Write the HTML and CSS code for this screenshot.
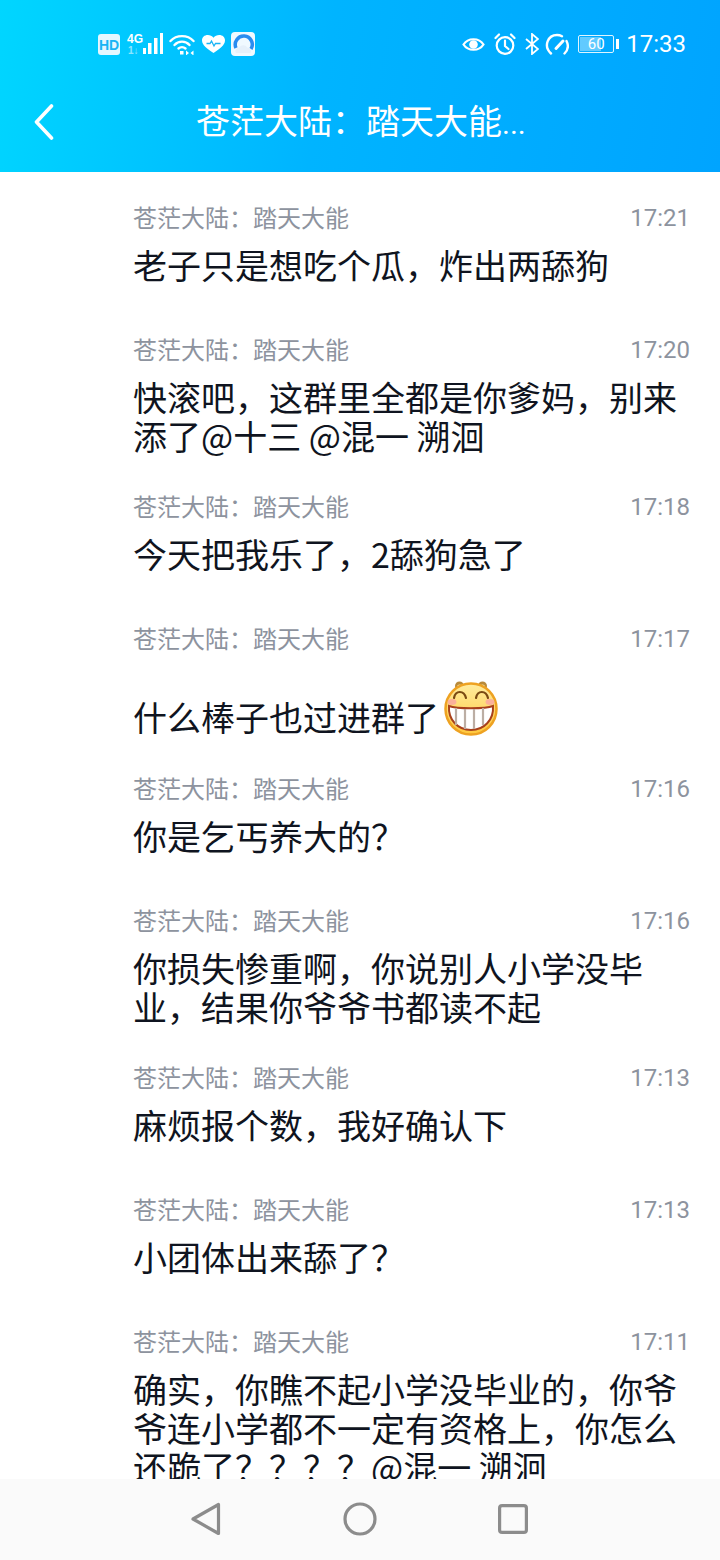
FILE: index.html
```html
<!DOCTYPE html>
<html lang="zh">
<head>
<meta charset="utf-8">
<title>苍茫大陆：踏天大能</title>
<link rel="stylesheet" href="styles.css">
</head>
<body>
<div class="page">
  <header class="top">
    <div class="status">
      <div class="status-group left">
        <svg class="ic" width="22" height="21" viewBox="0 0 22 21"><rect width="22" height="21" rx="3" fill="#e4f7ff"/><text x="11" y="16" class="hd">HD</text></svg>
        <svg class="ic signal" width="36" height="22" viewBox="0 0 36 22"><text x="0" y="10" class="net">4G</text><text x="1" y="21" class="net dim">1↓</text><g fill="#fff"><rect x="16" y="15" width="3" height="6"/><rect x="21" y="10" width="3.500" height="11"/><rect x="27" y="5" width="3.500" height="16"/><rect x="33" y="0" width="3" height="21"/></g></svg>
        <svg class="ic" width="26" height="21" viewBox="0 0 26 21" fill="none" stroke="#fff" stroke-width="2.400" stroke-linecap="round"><path d="M1.500 7C7.500 .5 18.500 .5 24.500 7"/><path d="M5.500 11C9.500 6.500 16.500 6.500 20.500 11"/><path d="M9.500 14.500C11.500 12.800 14.500 12.800 16.500 14.500"/><rect x="11" y="17" width="3.500" height="3.500" fill="#fff" stroke="none"/><path d="M20 19l-3-2.500v5zM21.500 19l3-2.500v5z" fill="#fff" stroke="none"/></svg>
        <svg class="ic heart" width="23" height="18" viewBox="0 0 23 18"><path d="M11.500 18C5.500 14 0 10.500 0 5.300 0 2.200 2.500 0 5.800 0 8 0 10.200 1 11.500 2.700 12.800 1 15 0 17.200 0 20.500 0 23 2.200 23 5.300 23 10.500 17.500 14 11.500 18Z" fill="#fff"/><path d="M4.500 8.500h3.500l1.500-2.500 2.500 5 1.500-2.500h5" fill="none" stroke="#19b4f5" stroke-width="1.300"/></svg>
        <svg class="ic" width="24" height="24" viewBox="0 0 24 24"><rect width="24" height="24" rx="4" fill="#f0f9ff"/><path d="M5 16A8.500 8.500 0 1 1 20 17" fill="none" stroke="#2a8cf0" stroke-width="3.500"/><path d="M5 21c-2-3 1-5.500 3.500-5.500 1-3 6.500-3 7.500 0 3 0 5 3 3.500 5.500z" fill="#e6f0fa"/></svg>
      </div>
      <div class="status-group right">
        <svg class="ic" width="23" height="17" viewBox="0 0 23 17"><path d="M1.500 8.500C6 1.500 17 1.500 21.500 8.500 17 15.500 6 15.500 1.500 8.500Z" fill="none" stroke="#fff" stroke-width="2.200"/><circle cx="11.500" cy="8.500" r="4.300" fill="#fff"/></svg>
        <svg class="ic" width="22" height="22" viewBox="0 0 22 22" fill="none" stroke="#fff" stroke-width="2.200" stroke-linecap="round"><circle cx="11" cy="12.500" r="8.300"/><path d="M11 7.500v5.500l3.500 3M1.500 5L5 1.500M20.500 5L17 1.500"/></svg>
        <svg class="ic" width="14" height="22" viewBox="0 0 14 22" fill="none" stroke="#fff" stroke-width="1.800"><path d="M1 6l12 10-6 5V1l6 5L1 16"/></svg>
        <svg class="ic speed" width="24" height="22" viewBox="0 0 24 22" fill="none" stroke="#fff" stroke-width="2.400" stroke-linecap="round"><path d="M6 20.500C-2 13 3 2 12 2c2 0 3.500 .4 5 1.200"/><path d="M21.500 8c2 4 1.500 9-2 12.500"/><path d="M11 15.500l7-7.500" stroke-width="3"/></svg>
        <div class="battery"><div class="battery-box"><span class="battery-fill"></span><span class="battery-num">60</span></div><span class="battery-tip"></span></div>
        <span class="clock">17:33</span>
      </div>
    </div>
    <div class="titlebar">
      <svg class="back" width="20" height="36" viewBox="0 0 20 36" fill="none" stroke="#fff" stroke-width="3.600" stroke-linecap="round" stroke-linejoin="round"><path d="M17.500 2L2.500 18l15 16"/></svg>
      <h1 class="title">苍茫大陆：踏天大能<span class="dots">...</span></h1>
    </div>
  </header>

  <main class="list">
    <article class="row">
      <div class="meta"><span>苍茫大陆：踏天大能</span><time>17:21</time></div>
      <p class="msg">老子只是想吃个瓜，炸出两舔狗</p>
    </article>
    <article class="row">
      <div class="meta"><span>苍茫大陆：踏天大能</span><time>17:20</time></div>
      <p class="msg">快滚吧，这群里全都是你爹妈，别来添了@十三 @混一 溯洄</p>
    </article>
    <article class="row">
      <div class="meta"><span>苍茫大陆：踏天大能</span><time>17:18</time></div>
      <p class="msg">今天把我乐了，2舔狗急了</p>
    </article>
    <article class="row">
      <div class="meta"><span>苍茫大陆：踏天大能</span><time>17:17</time></div>
      <p class="msg">什么棒子也过进群了<svg class="emoji" width="56" height="56" viewBox="0 0 56 56"><defs><linearGradient id="face" x1="0" y1="0" x2="0" y2="1"><stop offset="0" stop-color="#ffec9e"/><stop offset="1" stop-color="#ffc83c"/></linearGradient></defs><circle cx="16.500" cy="5" r="4.500" fill="#b98a3a"/><circle cx="39.500" cy="5" r="4.500" fill="#b98a3a"/><circle cx="16.500" cy="6" r="2.500" fill="#fbe7a8"/><circle cx="39.500" cy="6" r="2.500" fill="#fbe7a8"/><circle cx="28" cy="28" r="25.500" fill="url(#face)" stroke="#eea222" stroke-width="2.500"/><path d="M11 17c1.500-8 10-8 12 0M33 17c1.500-8 10-8 12 0" fill="none" stroke="#7a4a12" stroke-width="2.200" stroke-linecap="round"/><ellipse cx="9" cy="21" rx="4.500" ry="3" fill="#fbb09a"/><ellipse cx="47" cy="21" rx="4.500" ry="3" fill="#fbb09a"/><path d="M6 25c8 3 36 3 44 0 1 14-9 24-22 24S5 39 6 25Z" fill="#fff" stroke="#a8401c" stroke-width="2"/><path d="M13 27v17M22 28v20M31 28v20M40 27v17" stroke="#bcaea4" stroke-width="2.200"/></svg></p>
    </article>
    <article class="row">
      <div class="meta"><span>苍茫大陆：踏天大能</span><time>17:16</time></div>
      <p class="msg">你是乞丐养大的？</p>
    </article>
    <article class="row">
      <div class="meta"><span>苍茫大陆：踏天大能</span><time>17:16</time></div>
      <p class="msg">你损失惨重啊，你说别人小学没毕业，结果你爷爷书都读不起</p>
    </article>
    <article class="row">
      <div class="meta"><span>苍茫大陆：踏天大能</span><time>17:13</time></div>
      <p class="msg">麻烦报个数，我好确认下</p>
    </article>
    <article class="row">
      <div class="meta"><span>苍茫大陆：踏天大能</span><time>17:13</time></div>
      <p class="msg">小团体出来舔了？</p>
    </article>
    <article class="row">
      <div class="meta"><span>苍茫大陆：踏天大能</span><time>17:11</time></div>
      <p class="msg">确实，你瞧不起小学没毕业的，你爷爷连小学都不一定有资格上，你怎么还跪了？？？？@混一 溯洄</p>
    </article>
  </main>

  <nav class="navbar">
    <svg width="30" height="34" viewBox="0 0 30 34" fill="none" stroke="#8c8c8c" stroke-width="3.200" stroke-linejoin="round"><path d="M27.500 2.500V31.500L2 17Z"/></svg>
    <svg width="34" height="34" viewBox="0 0 34 34" fill="none" stroke="#8c8c8c" stroke-width="3.200"><circle cx="17" cy="17" r="15"/></svg>
    <svg class="nav-square" width="30" height="30" viewBox="0 0 30 30" fill="none" stroke="#8c8c8c" stroke-width="3.200"><rect x="1.600" y="1.600" width="26.800" height="26.800" rx="2.500"/></svg>
  </nav>
</div>
</body>
</html>
```

FILE: styles.css
```css
* { box-sizing: border-box; }
html, body { margin: 0; padding: 0; }
body { font-family: "Noto Sans CJK SC", "Noto Sans", sans-serif; background: #fff; }
.page { width: 720px; height: 1560px; display: flex; flex-direction: column; overflow: hidden; }

.top { height: 172px; flex: none; color: #fff; background: linear-gradient(100deg, #00d6ff 0%, #00b4ff 45%, #00a4ff 100%); }
.status { height: 88px; display: flex; justify-content: space-between; align-items: center; padding: 0 34px 0 98px; }
.status-group { display: flex; align-items: center; }
.status-group.left { gap: 6px; }
.status-group.right { gap: 9px; }
.ic { display: block; flex: none; }
.signal { margin-left: 1px; }
.heart { margin-left: 1px; }
.speed { margin-left: -3px; }
.hd { font: 700 14px "Liberation Sans", sans-serif; text-anchor: middle; fill: #19b4f5; }
.net { font: 700 12px "Liberation Sans", sans-serif; fill: #fff; }
.net.dim { opacity: .55; font-size: 10px; }
.battery { display: flex; align-items: center; gap: 2px; }
.battery-box { position: relative; width: 36px; height: 18px; border: 1px solid #dff4ff; border-radius: 2px; display: flex; align-items: center; justify-content: center; }
.battery-fill { position: absolute; left: 1px; top: 1px; bottom: 1px; width: 60%; background: rgba(255,255,255,.38); }
.battery-num { position: relative; font: 400 15px/1 Roboto, sans-serif; }
.battery-tip { width: 3px; height: 10px; background: #fff; }
.clock { font: 400 24px/1 Roboto, sans-serif; margin-left: -2px; }

.titlebar { height: 84px; display: flex; align-items: center; padding-left: 34px; margin-top: -8px; }
.back { flex: none; }
.title { margin: 0 0 0 142px; font-size: 34px; font-weight: 400; line-height: 44px; white-space: nowrap; }
.dots { font-family: Roboto, sans-serif; font-size: 30px; letter-spacing: 0; }

.list { flex: 1; min-height: 0; overflow: hidden; }
.row { min-height: 132px; padding: 30px 30px 6px 133px; }
.meta { display: flex; justify-content: space-between; height: 32px; line-height: 30px; font-size: 24px; color: #8d939e; }
.meta time { font-family: Roboto, sans-serif; font-size: 24px; line-height: 32px; color: #8d939e; }
.msg { margin: 11px 0 0; font-size: 34px; line-height: 39px; color: #0f1420; }
.emoji { display: inline-block; margin: 15px 0 0 4px; vertical-align: -6px; }

.navbar { height: 81px; flex: none; background: #fafafa; display: flex; align-items: center; justify-content: center; gap: 122px; padding: 0 2px 2px 0; }
.nav-square { margin-left: -1px; }
```
